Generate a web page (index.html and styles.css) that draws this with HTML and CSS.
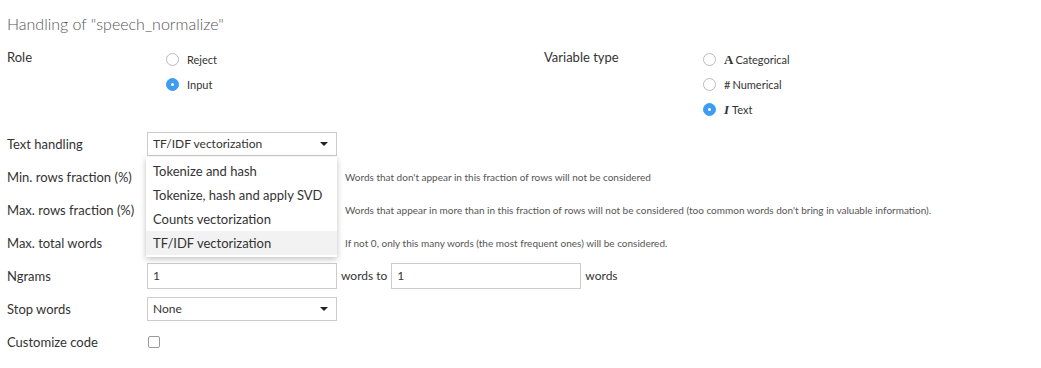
FILE: index.html
```html
<!DOCTYPE html>
<html lang="en">
<head>
    <meta charset="UTF-8">
    <title>Handling of "speech_normalize"</title>
    <link rel="stylesheet" href="styles.css">
</head>
<body>
    <h2 class="title">Handling of "speech_normalize"</h2>

    <div class="top">
        <div class="group group-left">
            <div class="group-label">Role</div>
            <div class="radios">
                <div class="radio-row"><span class="radio"></span>Reject</div>
                <div class="radio-row"><span class="radio checked"></span>Input</div>
            </div>
        </div>
        <div class="group">
            <div class="group-label">Variable type</div>
            <div class="radios">
                <div class="radio-row"><span class="radio"></span><span class="type-icon">A</span>Categorical</div>
                <div class="radio-row"><span class="radio"></span><span class="hash">#</span>Numerical</div>
                <div class="radio-row"><span class="radio checked"></span><span class="type-icon italic">I</span>Text</div>
            </div>
        </div>
    </div>

    <div class="form">
        <div class="row">
            <div class="label">Text handling</div>
            <div class="select-wrap">
                <div class="select">TF/IDF vectorization<span class="caret"></span></div>
                <ul class="menu">
                    <li>Tokenize and hash</li>
                    <li>Tokenize, hash and apply SVD</li>
                    <li>Counts vectorization</li>
                    <li class="active">TF/IDF vectorization</li>
                </ul>
            </div>
        </div>
        <div class="row">
            <div class="label">Min. rows fraction (%)</div>
            <div class="input"></div>
            <div class="help">Words that don't appear in this fraction of rows will not be considered</div>
        </div>
        <div class="row">
            <div class="label">Max. rows fraction (%)</div>
            <div class="input"></div>
            <div class="help">Words that appear in more than in this fraction of rows will not be considered (too common words don't bring in valuable information).</div>
        </div>
        <div class="row">
            <div class="label">Max. total words</div>
            <div class="input"></div>
            <div class="help">If not 0, only this many words (the most frequent ones) will be considered.</div>
        </div>
        <div class="row">
            <div class="label">Ngrams</div>
            <div class="input">1</div>
            <span class="inline-text">words to</span>
            <div class="input">1</div>
            <span class="inline-text">words</span>
        </div>
        <div class="row">
            <div class="label">Stop words</div>
            <div class="select">None<span class="caret"></span></div>
        </div>
        <div class="row">
            <div class="label">Customize code</div>
            <span class="checkbox"></span>
        </div>
    </div>
</body>
</html>
```

FILE: styles.css
```css
body {
    margin: 0;
    padding: 0 7px;
    font-family: Lato, "Open Sans", sans-serif;
    font-size: 13px;
    color: #333;
    background: #fff;
}
.title {
    font-size: 16px;
    font-weight: 300;
    color: #555;
    margin: 0;
    padding-top: 14px;
    height: 28px;
    line-height: 20px;
}
.top { display: flex; }
.group { display: flex; }
.group-left { width: 537px; }
.group-label { width: 159px; line-height: 20px; padding-top: 5px; }
.radios { padding-top: 5px; }
.radio-row {
    display: flex;
    align-items: center;
    height: 25px;
    font-size: 11px;
}
.radio {
    width: 11px;
    height: 11px;
    border: 1px solid #bbb;
    border-radius: 50%;
    margin-right: 8px;
    box-sizing: content-box;
    position: relative;
}
.radio.checked {
    background: #3d9df5;
    border-color: #3d9df5;
}
.radio.checked::after {
    content: "";
    position: absolute;
    left: 4px;
    top: 4px;
    width: 3px;
    height: 3px;
    border-radius: 50%;
    background: #fff;
}
.type-icon {
    font-family: "Liberation Serif", serif;
    font-weight: bold;
    font-size: 13px;
    margin-right: 2px;
}
.type-icon.italic { font-style: italic; margin-right: 3px; }
.hash { margin-right: 2px; }
.form { padding-top: 5px; }
.row {
    display: flex;
    align-items: center;
    height: 33px;
}
.label { width: 140px; }
.select, .input {
    width: 190px;
    height: 24px;
    border: 1px solid #ccc;
    box-sizing: border-box;
    display: flex;
    align-items: center;
    padding: 0 5px;
    font-size: 12px;
    background: #fff;
}
.input { height: 26px; }
.select { justify-content: space-between; }
.caret {
    width: 0;
    height: 0;
    border-left: 4px solid transparent;
    border-right: 4px solid transparent;
    border-top: 4px solid #222;
    margin-right: 3px;
}
.select-wrap { position: relative; }
.menu {
    position: absolute;
    left: -1px;
    top: 25px;
    width: 191px;
    margin: 0;
    padding: 2px 0;
    list-style: none;
    background: #fff;
    box-shadow: 0 2px 6px rgba(0,0,0,0.25);
    z-index: 2;
}
.menu li {
    height: 24px;
    line-height: 24px;
    padding-left: 7px;
    font-size: 13px;
}
.menu li.active { background: #f2f2f2; }
.help {
    margin-left: 8px;
    font-size: 10px;
    color: #555;
}
.inline-text { margin: 0 4px; font-size: 12px; }
.checkbox {
    width: 10px;
    height: 10px;
    border: 1px solid #999;
    border-radius: 2px;
    margin-left: 1px;
}
```
